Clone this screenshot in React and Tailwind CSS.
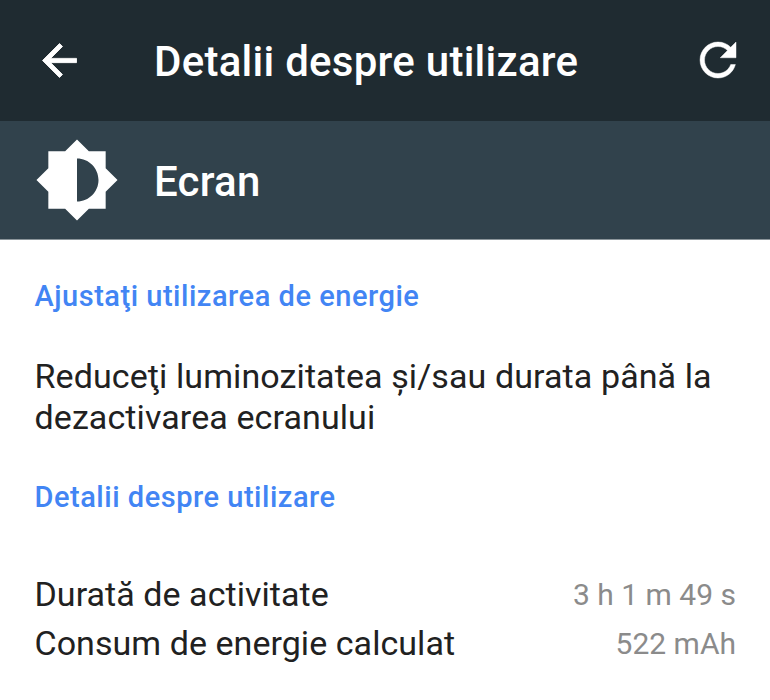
const details = [
  { label: "Durată de activitate", value: "3 h 1 m 49 s" },
  { label: "Consum de energie calculat", value: "522 mAh" },
];

const BackIcon = () => (
  <svg viewBox="0 0 24 24" className="size-[51px]" fill="#fff" stroke="#fff" strokeWidth="0.4" strokeLinejoin="round">
    <path d="M20 11H7.83l5.59-5.59L12 4l-8 8 8 8 1.41-1.41L7.83 13H20v-2z" />
  </svg>
);

const RefreshIcon = () => (
  <svg viewBox="0 0 24 24" className="size-[54px]" fill="#fff" stroke="#fff" strokeWidth="0.2">
    <path d="M17.65 6.35C16.2 4.9 14.21 4 12 4c-4.42 0-7.99 3.58-7.99 8s3.57 8 7.99 8c3.73 0 6.84-2.55 7.73-6h-2.08c-.82 2.33-3.04 4-5.65 4-3.31 0-6-2.69-6-6s2.69-6 6-6c1.66 0 3.14.69 4.22 1.78L13 11h7V4l-2.35 2.35z" />
  </svg>
);

const BrightnessIcon = () => (
  <svg viewBox="0 0 24 24" className="size-[86px]" fill="#fff">
    <path d="M20 15.31L23.31 12 20 8.69V4h-4.69L12 .69 8.69 4H4v4.69L.69 12 4 15.31V20h4.69L12 23.31 15.31 20H20v-4.69zM12 18V6c3.31 0 6 2.69 6 6s-2.69 6-6 6z" />
  </svg>
);

const App = () => {
  return (
    <div className="h-[700px] w-[770px] overflow-hidden bg-white font-[Roboto,sans-serif] text-[#212121]">
      <header className="flex h-[121px] items-center bg-[#1f2b31] pb-px pl-[34px] pr-[25px] text-white">
        <BackIcon />
        <h1 className="ml-[69px] flex-1 pt-[4px] text-[42px] font-medium leading-none tracking-[0.26px]">
          Detalii despre utilizare
        </h1>
        <RefreshIcon />
      </header>

      <div className="flex h-[119px] items-center border-b border-[#8b959a] bg-[#31424c] pl-[34px] text-white">
        <BrightnessIcon />
        <h2 className="ml-[34px] pt-[4px] text-[42px] font-medium leading-none tracking-[0.22px]">Ecran</h2>
      </div>

      <main className="pl-[34.5px] pr-[34px] pt-[37px]">
        <h3 className="text-[29px] font-medium leading-[38px] tracking-[0.52px] text-[#4285f4]">
          Ajustaţi utilizarea de energie
        </h3>
        <p className="mt-[41px] text-[34px] leading-[41px] tracking-[0.1px]">
          Reduceţi luminozitatea și/sau durata până la dezactivarea ecranului
        </p>
        <h3 className="mt-[40px] text-[29px] font-medium leading-[38px] tracking-[0.52px] text-[#4285f4]">
          Detalii despre utilizare
        </h3>
        <dl className="mt-[54px]">
          {details.map((item) => (
            <div key={item.label} className="flex h-[49px] items-center justify-between">
              <dt className="text-[34px] tracking-[0.05px]">{item.label}</dt>
              <dd className="text-[30px] text-[#8b8b8b]">{item.value}</dd>
            </div>
          ))}
        </dl>
      </main>
    </div>
  );
};

export default App;
